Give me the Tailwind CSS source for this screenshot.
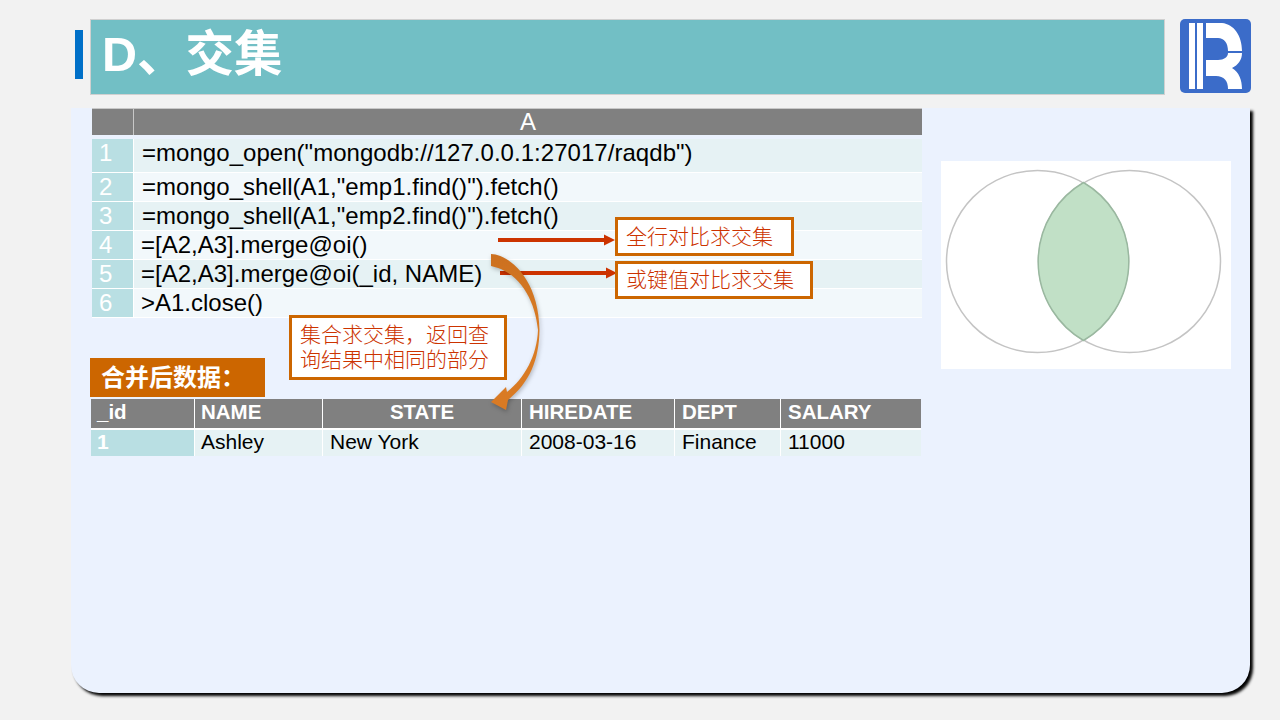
<!DOCTYPE html>
<html lang="zh-CN">
  <head>
    <meta charset="UTF-8" />
    <title>D、交集</title>
    <script src="https://cdn.jsdelivr.net/npm/@tailwindcss/browser@4"></script>
  </head>
  <body class="w-[1280px] h-[720px] overflow-hidden relative bg-[#f2f2f2] font-['Liberation_Sans','Noto_Sans_CJK_SC',sans-serif] text-black">
    <!-- Title bar -->
    <header class="flex items-start pl-[75px] pt-[19px] h-[108px]">
      <div class="w-2 h-[49px] mt-[11px] bg-[#0070c8]"></div>
      <div class="ml-[7px] w-[1075px] h-[76px] bg-[#72bfc5] border border-[#d0d0d0] pl-[11px] pb-[6px] flex items-center">
        <h1 class="text-[48.500px] font-bold text-white leading-none">D、交集</h1>
      </div>
      <svg class="ml-[15px] w-[71px] h-[74px]" viewBox="1180 19 71 74">
        <rect x="1180" y="19" width="71" height="74" rx="5" fill="#3b6cc9" />
        <rect x="1189" y="23" width="6" height="66" fill="#fff" />
        <rect x="1197" y="23" width="6" height="66" fill="#fff" />
        <path d="M1206 23H1222C1234 24 1242 36 1242 51H1228C1228 43 1224 38 1218 38H1206Z" fill="#fff" />
        <path d="M1206 60H1218C1224 60 1228 57 1228 53H1242C1242 60 1238 65 1232 68C1239 72 1242 80 1242 89H1228C1228 81 1224 76 1216 76H1206Z" fill="#fff" />
      </svg>
    </header>

    <!-- Main panel -->
    <main class="ml-[71px] w-[1179px] h-[585px] bg-[#ebf2fe] rounded-b-[28px] shadow-[3px_3px_3px_#000] flex">
      <div class="ml-[19px] w-[832px]">
        <!-- Script grid -->
        <section class="ml-[2px] w-[830px] text-[24px] leading-[28px]">
          <div class="grid grid-cols-[41px_1fr] gap-x-px h-[27px] bg-[#c8c8c8] pt-px leading-[26px]">
            <div class="bg-[#808080]"></div>
            <div class="bg-[#808080] text-white text-center">A</div>
          </div>
          <div class="grid grid-cols-[41px_1fr] gap-x-px gap-y-px mt-[4px] bg-white border-b border-white">
            <div class="h-[33px] bg-[#b9dfe3] text-white pl-[7px]">1</div>
            <div class="h-[33px] bg-[#e6f2f4] pl-[8px] tracking-[0.040px]">=mongo_open("mongodb://127.0.0.1:27017/raqdb")</div>
            <div class="h-[28px] bg-[#b9dfe3] text-white pl-[7px]">2</div>
            <div class="h-[28px] bg-[#f2f8fb] pl-[8px] tracking-[0.040px]">=mongo_shell(A1,"emp1.find()").fetch()</div>
            <div class="h-[28px] bg-[#b9dfe3] text-white pl-[7px]">3</div>
            <div class="h-[28px] bg-[#e6f2f4] pl-[8px] tracking-[0.040px]">=mongo_shell(A1,"emp2.find()").fetch()</div>
            <div class="h-[28px] bg-[#b9dfe3] text-white pl-[7px]">4</div>
            <div class="h-[28px] bg-[#f2f8fb] pl-[7px]">=[A2,A3].merge@oi()</div>
            <div class="h-[28px] bg-[#b9dfe3] text-white pl-[7px]">5</div>
            <div class="h-[28px] bg-[#e6f2f4] pl-[7px]">=[A2,A3].merge@oi(_id, NAME)</div>
            <div class="h-[28px] bg-[#b9dfe3] text-white pl-[7px]">6</div>
            <div class="h-[28px] bg-[#f2f8fb] pl-[7px]">&gt;A1.close()</div>
          </div>
        </section>

        <!-- Merged result -->
        <h2 class="mt-[40px] w-[175px] h-[39px] bg-[#cc6600] text-white text-[24px] font-bold leading-[39px] pl-[11px]">合并后数据：</h2>
        <section class="mt-[2px] ml-px w-[830px] bg-white">
          <div class="grid grid-cols-[103px_127px_198px_152px_105px_1fr] gap-x-px h-[29px] text-[20.500px] leading-[25px] font-bold text-white">
            <div class="bg-[#808080] pl-[6px]">_id</div>
            <div class="bg-[#808080] pl-[6px]">NAME</div>
            <div class="bg-[#808080] text-center">STATE</div>
            <div class="bg-[#808080] pl-[7px]">HIREDATE</div>
            <div class="bg-[#808080] pl-[7px]">DEPT</div>
            <div class="bg-[#808080] pl-[7px]">SALARY</div>
          </div>
          <div class="grid grid-cols-[103px_127px_198px_152px_105px_1fr] gap-x-px h-[26px] mt-[2px] text-[21px] leading-[24px]">
            <div class="bg-[#b9dfe3] pl-[6px] font-bold text-white">1</div>
            <div class="bg-[#e6f2f4] pl-[6px]">Ashley</div>
            <div class="bg-[#e6f2f4] pl-[7px]">New York</div>
            <div class="bg-[#e6f2f4] pl-[7px]">2008-03-16</div>
            <div class="bg-[#e6f2f4] pl-[7px]">Finance</div>
            <div class="bg-[#e6f2f4] pl-[7px]">11000</div>
          </div>
        </section>
      </div>

      <!-- Venn diagram -->
      <svg class="ml-[19px] mt-[53px] w-[290px] h-[208px] bg-white" viewBox="941 161 290 208">
        <circle cx="1037.5" cy="261.5" r="91" fill="none" stroke="#c4c4c4" stroke-width="1.5" />
        <circle cx="1129.5" cy="261.5" r="91" fill="none" stroke="#c4c4c4" stroke-width="1.5" />
        <path d="M1083.5 182.5A91.500 91.500 0 0 1 1083.500 340.500A91.500 91.500 0 0 1 1083.500 182.500Z" fill="#c1e0c6" stroke="#9ab8a0" stroke-width="1.5" />
      </svg>
    </main>

    <!-- Annotations over the grid -->
    <svg class="absolute left-0 top-0 w-[1280px] h-[720px] pointer-events-none" viewBox="0 0 1280 720">
      <defs>
        <linearGradient id="curve" x1="0" y1="0" x2="0" y2="1">
          <stop offset="0" stop-color="#cc701f" />
          <stop offset="0.5" stop-color="#d97c25" />
          <stop offset="1" stop-color="#d97a24" />
        </linearGradient>
      </defs>
      <path d="M498 238H604V234.500L615 240L604 245.500V242H498Z" fill="#cc3300" />
      <path d="M500 271H606V267.500L617 273L606 278.500V275H500Z" fill="#cc3300" />
      <path class="drop-shadow-[1px_2px_2px_rgba(0,0,0,0.25)]" d="M491 254C512 255 539 282 539.500 330C539 360 530 382 508 400L506 410L491 402L506 387L507 392C525 378 537 355 538 330C535 300 520 272 491 266Z" fill="url(#curve)" />
    </svg>
    <div class="absolute left-[615px] top-[217px] w-[179px] h-[39px] bg-white border-[3px] border-[#cc6600] pl-[8px] text-[21px] leading-[33px] text-[#cc3300] font-light">全行对比求交集</div>
    <div class="absolute left-[615px] top-[261px] w-[198px] h-[38px] bg-white border-[3px] border-[#cc6600] pl-[8px] text-[21px] leading-[32px] text-[#cc3300] font-light">或键值对比求交集</div>
    <div class="absolute left-[289px] top-[315px] w-[218px] h-[65px] bg-white border-[3px] border-[#cc6600] pl-[8px] pt-[4px] text-[21px] leading-[25px] text-[#cc3300] font-light">集合求交集，返回查<br />询结果中相同的部分</div>
  </body>
</html>
